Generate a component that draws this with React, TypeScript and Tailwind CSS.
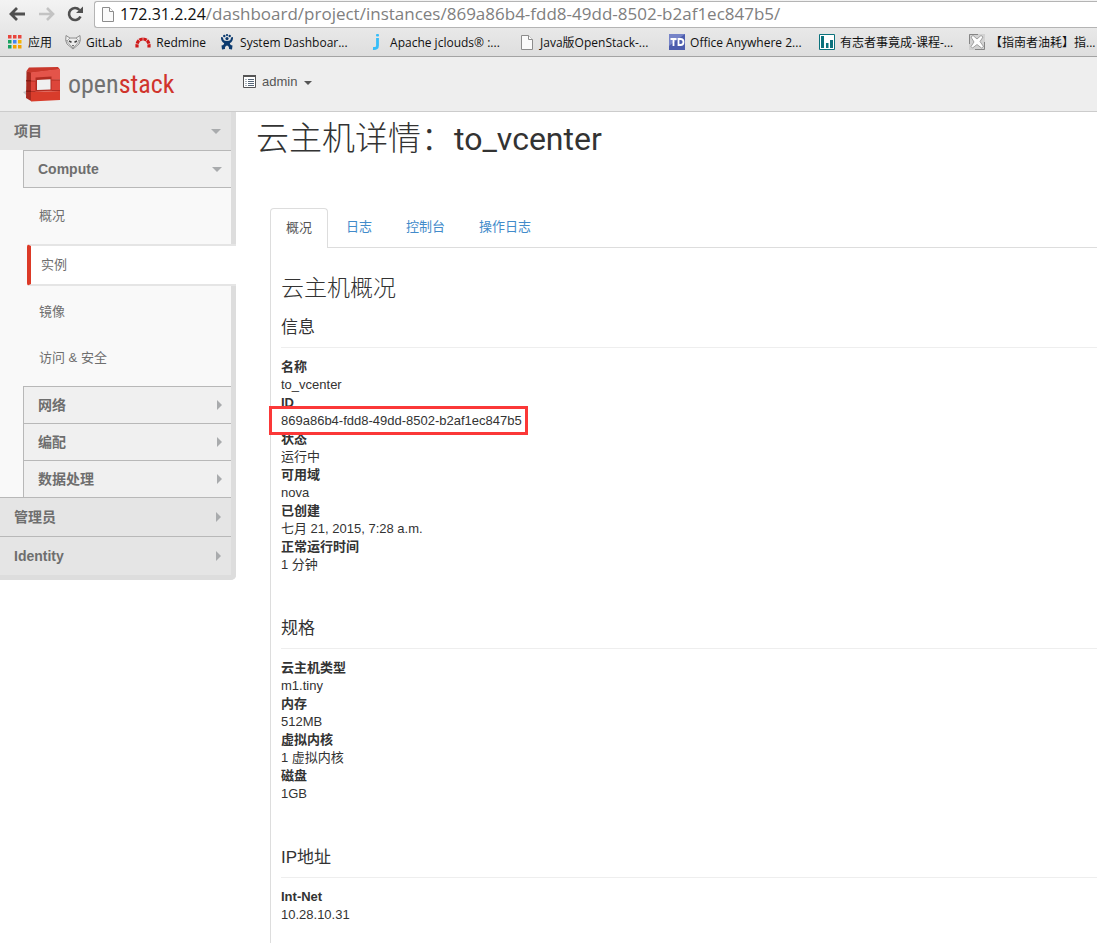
import type { ReactNode } from "react";

type Bookmark = { label: string; icon: ReactNode; fixed?: boolean };

type Detail = { term: string; value: string; marked?: boolean };

function PageIcon({ className }: { className: string }) {
  return (
    <svg className={className} viewBox="0 0 12 15" aria-hidden="true">
      <path d="M.5.5h7l4 4v10H.5z" fill="#fafafa" stroke="#8c8c8c" />
      <path d="M7.5.5v4h4" fill="#fff" stroke="#8c8c8c" />
    </svg>
  );
}

function AppsIcon() {
  const colors = ["#e8453c", "#e8453c", "#e8453c", "#1aa260", "#4285f4", "#f4b400", "#1aa260", "#f4a100", "#f4a100"];
  return (
    <svg className="h-4 w-4" viewBox="0 0 16 16" aria-hidden="true">
      {colors.map((c, i) => (
        <rect key={i} x={1 + (i % 3) * 5} y={1 + Math.floor(i / 3) * 5} width="3.500" height="3.500" fill={c} />
      ))}
    </svg>
  );
}

function GitLabIcon() {
  return (
    <svg className="h-4 w-4" viewBox="0 0 16 16" fill="#ececec" stroke="#858585" strokeWidth=".9" aria-hidden="true">
      <path d="M1 1.500 5 4h6l4-2.500.3 5L14 10l-6 5-6-5L.7 6.500z" />
      <path d="m1 6 4 5 3 3 3-3 4-5M5 4 2 7M11 4l3 3" fill="none" strokeWidth=".7" />
      <path d="M4 7l2.500 1.200M12 7 9.500 8.200" stroke="#444" strokeWidth="1.500" />
      <path d="M6.800 11h2.400L8 12.800z" fill="#555" stroke="none" />
    </svg>
  );
}

function RedmineIcon() {
  return (
    <svg className="h-4 w-4" viewBox="0 0 16 16" fill="none" aria-hidden="true">
      <path d="M2 13.500V11a6 6 0 0 1 12 0v2.500" stroke="#d01818" strokeWidth="3.200" strokeDasharray="3.400 .6" />
    </svg>
  );
}

function JiraIcon() {
  return (
    <svg className="h-4 w-4" viewBox="0 0 16 16" fill="#0b3a6f" aria-hidden="true">
      <circle cx="5.300" cy="2" r="1.200" />
      <circle cx="8" cy="1.100" r="1.100" />
      <circle cx="10.700" cy="2" r="1.200" />
      <circle cx="8" cy="4.600" r="1.600" />
      <path d="M2 3l2 .5c0 2.500 1 3.500 4 3.500s4-1 4-3.500l2-.5c.3 3-1 5-3.200 6.200.3 1.500 1 2 2.700 2.300L13 15.500l-3-.5c.3-2-.5-3-2-3.500-1.500.5-2.300 1.500-2 3.500l-3 .5-.5-4c1.700-.3 2.400-.8 2.700-2.300C3 8 1.700 6 2 3z" />
    </svg>
  );
}

function JcloudsIcon() {
  return (
    <svg className="h-4 w-4" viewBox="0 0 16 16" fill="none" aria-hidden="true">
      <path d="M8.500 4v7.500c0 2-1 3.200-4.500 3" stroke="#36bdf8" strokeWidth="2.800" />
      <rect x="7" y="0" width="3" height="2.500" rx="1" fill="#36bdf8" />
    </svg>
  );
}

function OfficeIcon() {
  return (
    <svg className="h-4 w-4" viewBox="0 0 16 16" aria-hidden="true">
      <path d="M0 0h16v16H0z" fill="#4c5cad" />
      <path d="M0 0h16L0 12z" fill="#7684c8" />
      <path d="M1.500 5h6M4.500 5v7M9.500 5v6h2c4 0 4-6 0-6z" fill="none" stroke="#fff" strokeWidth="1.800" />
    </svg>
  );
}

function CourseIcon() {
  return (
    <svg className="h-4 w-4" viewBox="0 0 16 16" aria-hidden="true">
      <path d="M.5.5h15v15H.5z" fill="#fff" stroke="#0b727c" />
      <path d="M2 2h3v12H2zM7 9h2.500v5H7zM11 6h3v8h-3z" fill="#0b727c" />
    </svg>
  );
}

function CompassIcon() {
  return (
    <svg className="h-4 w-4" viewBox="0 0 16 16" aria-hidden="true">
      <path d="M0 0h16v16H0z" fill="#d2d2d2" />
      <path d="M.5 10V.5H9M6 15.500h9.500V8" fill="none" stroke="#858585" />
      <path d="m2 3 2-1.500L8 5l4-3.500L14 3l-3 4.500 3.500 5-2 1.500L8 10.500 3.500 14 2 12.500 5 8z" fill="#fff" stroke="#8e8e8e" strokeWidth=".8" />
    </svg>
  );
}

const bookmarks: Bookmark[] = [
  { label: "GitLab", icon: <GitLabIcon /> },
  { label: "Redmine", icon: <RedmineIcon /> },
  { label: "System Dashboar...", icon: <JiraIcon />, fixed: true },
  { label: "Apache jclouds® :...", icon: <JcloudsIcon />, fixed: true },
  { label: "Java版OpenStack-...", icon: <PageIcon className="h-[15px] w-4" />, fixed: true },
  { label: "Office Anywhere 2...", icon: <OfficeIcon />, fixed: true },
  { label: "有志者事竟成-课程-...", icon: <CourseIcon />, fixed: true },
  { label: "【指南者油耗】指...", icon: <CompassIcon />, fixed: true },
];

const info: Detail[] = [
  { term: "名称", value: "to_vcenter" },
  { term: "ID", value: "869a86b4-fdd8-49dd-8502-b2af1ec847b5", marked: true },
  { term: "状态", value: "运行中" },
  { term: "可用域", value: "nova" },
  { term: "已创建", value: "七月 21, 2015, 7:28 a.m." },
  { term: "正常运行时间", value: "1 分钟" },
];

const specs: Detail[] = [
  { term: "云主机类型", value: "m1.tiny" },
  { term: "内存", value: "512MB" },
  { term: "虚拟内核", value: "1 虚拟内核" },
  { term: "磁盘", value: "1GB" },
];

const addresses: Detail[] = [{ term: "Int-Net", value: "10.28.10.31" }];

function BrowserBar() {
  return (
    <div className="border-b border-[#a3a3a3] bg-gradient-to-b from-[#f3f3f3] to-[#dedede] font-['Open_Sans','Noto_Sans_CJK_SC',sans-serif]">
      <div className="flex h-7 items-center pl-2">
        <button type="button" aria-label="Back" className="flex w-7 justify-start">
          <svg className="h-4 w-[18px]" viewBox="0 0 18 16" fill="none" stroke="#505050" strokeWidth="2.800">
            <path d="M17 8H3M9 2 3 8l6 6" />
          </svg>
        </button>
        <button type="button" aria-label="Forward" className="flex w-7 justify-start pl-[2px]">
          <svg className="h-4 w-[18px]" viewBox="0 0 18 16" fill="none" stroke="#c3c3c3" strokeWidth="2.600">
            <path d="M1 8h14M9 2l6 6-6 6" />
          </svg>
        </button>
        <button type="button" aria-label="Reload" className="flex w-[30px] justify-start pl-[3px]">
          <svg className="h-4 w-4" viewBox="0 0 16 16" fill="none">
            <path d="M13.500 10.500a6 6 0 1 1-1-6.500" stroke="#505050" strokeWidth="2.600" />
            <path d="M16 .5V7H9z" fill="#505050" />
          </svg>
        </button>
        <label className="flex h-[27px] flex-1 items-center overflow-hidden rounded-l-[3px] border border-r-0 border-[#b4b4b4] bg-white pl-[7px]">
          <PageIcon className="mr-[6px] h-[15px] w-3 shrink-0" />
          <span className="text-base text-[#111]">172.31.2.24</span>
          <input
            className="min-w-0 flex-1 text-[17px] text-[#808080] outline-none"
            aria-label="Address"
            defaultValue="/dashboard/project/instances/869a86b4-fdd8-49dd-8502-b2af1ec847b5/"
          />
        </label>
      </div>
      <div className="flex h-7 items-center gap-[13px] overflow-hidden pl-[7px] text-xs text-[#111]">
        <a href="#apps" className="flex shrink-0 items-center gap-[5px] whitespace-nowrap">
          <AppsIcon />
          <span className="pt-[2px]">应用</span>
        </a>
        {bookmarks.map((b) => (
          <a key={b.label} href="#bookmark" className="flex shrink-0 items-center gap-[5px] whitespace-nowrap">
            {b.icon}
            <span className={b.fixed ? "w-[116px] pt-[2px]" : "pt-[2px]"}>{b.label}</span>
          </a>
        ))}
      </div>
    </div>
  );
}

function OpenStackMark() {
  return (
    <svg className="h-9 w-[38px]" viewBox="0 0 38 36" aria-hidden="true">
      <path d="M0 26l6-2v8z" fill="#c4c4c4" />
      <path d="M3.500 5 8 6v29l-5-3z" fill="#a82a20" />
      <path d="M3.500 5 6 1.500 35 1l2 2.500L8 7z" fill="#c9382c" />
      <path d="M8 6.500 37 3v10.500L8 15z" fill="#e4544a" />
      <path d="M8 15l29-1.500V25L8 26z" fill="#dd453a" />
      <path d="M8 26l29-1v9L8 35.500z" fill="#d83c2b" />
      <path d="M3.200 14H8v1.500H3.200zM3.200 24.500H8V26H3.200z" fill="#861c14" />
      <path d="M12.500 11.500l16-1v14l-16 1z" fill="#b02c22" />
      <path d="M14 14l13.500-.8v10.300L14 24z" fill="#f0f0f0" />
      <path d="M8 15h4.500M28.500 14H37M8 25.500h4.500M28.500 24.500H37" stroke="#a82a20" strokeWidth=".9" />
    </svg>
  );
}

function Header() {
  return (
    <header className="flex h-[55px] items-center border-b border-[#ccc] bg-[#eee]">
      <a href="#home" className="flex w-[243px] items-center pl-[23px]">
        <OpenStackMark />
        <span className="pl-[7px] font-['Roboto_Condensed','Roboto',sans-serif] text-[26px] leading-8 text-[#717171]">
          open<span className="text-[#d0342c]">stack</span>
        </span>
      </a>
      <button type="button" className="flex items-center pb-1 text-[13px] text-[#555]">
        <svg className="mr-[6px] mb-[2px] h-[13px] w-[13px]" viewBox="0 0 13 13" fill="none" aria-hidden="true">
          <path d="M.5.5h12v12H.5z" fill="#fff" stroke="#555" />
          <path d="M0 1h13" stroke="#555" strokeWidth="2" />
          <path d="M2.500 4.500h1M2.500 6.500h1M2.500 8.500h1M2.500 10.500h1M5 4.500h6M5 6.500h6M5 8.500h6M5 10.500h6" stroke="#567" />
        </svg>
        admin
        <span className="ml-[7px] mt-[2px] border-x-4 border-t-4 border-x-transparent border-t-[#555]" />
      </button>
    </header>
  );
}

function Arrow({ open }: { open?: boolean }) {
  return open ? (
    <span className="border-x-[5px] border-t-[5px] border-x-transparent border-t-[#a9abad]" />
  ) : (
    <span className="border-y-[5px] border-l-[5px] border-y-transparent border-l-[#a9abad]" />
  );
}

function GroupButton({ label }: { label: string }) {
  return (
    <button type="button" className="flex h-[37px] w-full items-center justify-between border-t border-l border-[#b8b8b8] bg-[#f0f0f0] pr-[9px] pl-[14px] font-bold">
      {label}
      <Arrow />
    </button>
  );
}

function Sidebar() {
  return (
    <aside className="w-[236px] shrink-0 self-start rounded-br-[5px] border-r-[5px] border-b-[5px] border-[#ddd] bg-[#f9f9f9] text-sm text-[#6e6e6e]">
      <button type="button" className="flex h-[38px] w-full items-center justify-between bg-[#e5e5e5] pr-[10px] pl-[14px] font-bold">
        项目
        <Arrow open />
      </button>
      <div className="pl-[23px]">
        <button type="button" className="flex h-[38px] w-full items-center justify-between border-y border-l border-[#b8b8b8] bg-[#f0f0f0] pr-[9px] pl-[14px] font-bold">
          Compute
          <Arrow open />
        </button>
        <nav className="flex flex-col pb-2 text-[13px]">
          <a href="#overview" className="flex h-14 items-center pl-4">概况</a>
          <a
            href="#instances"
            className="-mr-[5px] ml-1 flex h-[42px] items-center rounded-l-[3px] border-y-2 border-l-4 border-y-[#e5e5e5] border-l-[#dc3a27] bg-white pl-[10px]"
          >
            实例
          </a>
          <a href="#images" className="flex h-[52px] items-center pl-4">镜像</a>
          <a href="#security" className="flex h-10 items-center pl-4">访问 &amp; 安全</a>
        </nav>
        <GroupButton label="网络" />
        <GroupButton label="编配" />
        <GroupButton label="数据处理" />
      </div>
      <button type="button" className="flex h-[39px] w-full items-center justify-between border-t border-[#b8b8b8] bg-[#e5e5e5] pr-[10px] pl-[14px] font-bold">
        管理员
        <Arrow />
      </button>
      <button type="button" className="flex h-[39px] w-full items-center justify-between border-t border-[#b8b8b8] bg-[#e5e5e5] pr-[10px] pl-[14px] font-bold">
        Identity
        <Arrow />
      </button>
    </aside>
  );
}

function DetailSection({ title, items }: { title: string; items: Detail[] }) {
  return (
    <section>
      <h4 className="text-[17px] leading-[22px]">{title}</h4>
      <hr className="mt-2 mb-[10px] border-[#eee]" />
      <dl className="text-[13px] leading-[18px]">
        {items.map((item) => (
          <div key={item.term}>
            <dt className="h-[18px] font-bold">{item.term}</dt>
            <dd className="relative h-[18px]">
              {item.marked ? (
                <span className="absolute -top-[6px] -left-3 border-3 border-[#fb3838] bg-white pr-[3px] pl-[9px] leading-[23px] whitespace-nowrap">
                  {item.value}
                </span>
              ) : (
                item.value
              )}
            </dd>
          </div>
        ))}
      </dl>
    </section>
  );
}

export default function App() {
  return (
    <div className="flex min-h-screen flex-col bg-white font-['Liberation_Sans','Noto_Sans_CJK_SC',sans-serif] text-[#333]">
      <BrowserBar />
      <Header />
      <div className="flex flex-1">
        <Sidebar />
        <main className="flex min-w-0 flex-1 flex-col">
          <h1 className="pt-[7px] pb-[49px] pl-5 font-['Roboto','Noto_Sans_CJK_SC',sans-serif] text-[33px] leading-10 font-light">
            云主机详情：<span className="text-[32px] font-normal">to_vcenter</span>
          </h1>
          <div className="flex flex-1 flex-col pl-[34px]">
            <div role="tablist" className="flex h-10 gap-[2px] border-b border-[#ddd] text-[13px] text-[#428bca]">
              <button type="button" role="tab" aria-selected="true" className="-mb-px rounded-t-[4px] border border-b-0 border-[#ddd] bg-white px-[15px] pb-[2px] text-[#555]">
                概况
              </button>
              <button type="button" role="tab" aria-selected="false" className="px-4 pb-[2px]">日志</button>
              <button type="button" role="tab" aria-selected="false" className="px-4 pb-[2px]">控制台</button>
              <button type="button" role="tab" aria-selected="false" className="px-4 pb-[2px]">操作日志</button>
            </div>
            <div role="tabpanel" className="flex-1 border-l border-[#ddd] pt-[26px] pb-5 pl-[10px]">
              <h3 className="mb-[15px] text-[23px] leading-7 font-light">云主机概况</h3>
              <div className="flex flex-col gap-11">
                <DetailSection title="信息" items={info} />
                <DetailSection title="规格" items={specs} />
                <DetailSection title="IP地址" items={addresses} />
              </div>
            </div>
          </div>
        </main>
      </div>
    </div>
  );
}
